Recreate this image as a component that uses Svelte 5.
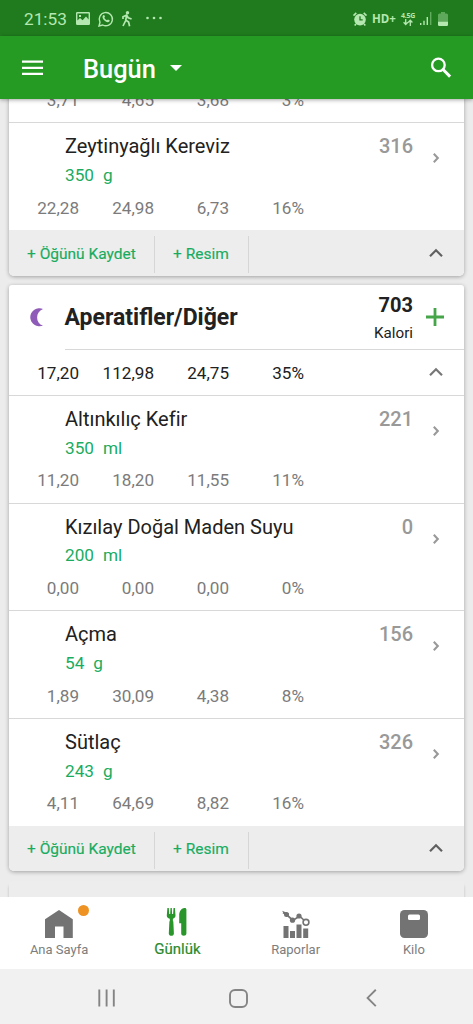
<script lang="ts">
  type Food = {
    name: string;
    amount: string;
    unit: string;
    calories: number;
    values: string[];
  };

  const lunch: Food[] = [
    { name: "", amount: "", unit: "", calories: 0, values: ["3,71", "4,65", "3,68", "3%"] },
    { name: "Zeytinyağlı Kereviz", amount: "350", unit: "g", calories: 316, values: ["22,28", "24,98", "6,73", "16%"] },
  ];

  const snacks: Food[] = [
    { name: "Altınkılıç Kefir", amount: "350", unit: "ml", calories: 221, values: ["11,20", "18,20", "11,55", "11%"] },
    { name: "Kızılay Doğal Maden Suyu", amount: "200", unit: "ml", calories: 0, values: ["0,00", "0,00", "0,00", "0%"] },
    { name: "Açma", amount: "54", unit: "g", calories: 156, values: ["1,89", "30,09", "4,38", "8%"] },
    { name: "Sütlaç", amount: "243", unit: "g", calories: 326, values: ["4,11", "64,69", "8,82", "16%"] },
  ];

  const totals = ["17,20", "112,98", "24,75", "35%"];
</script>

{#snippet chevronUp()}
  <svg class="chevron-up" width="16" height="12" viewBox="0 0 16 12">
    <path d="M2 9.2 8 3.2l6 6" fill="none" stroke="currentColor" stroke-width="2.2" />
  </svg>
{/snippet}

{#snippet macros(values: string[])}
  <div class="macros">
    {#each values as value}
      <span>{value}</span>
    {/each}
  </div>
{/snippet}

{#snippet foodRow(food: Food)}
  <div class="food">
    {#if food.name}
      <div class="food-top">
        <div>
          <p class="food-name">{food.name}</p>
          <p class="amount"><span>{food.amount}</span><span>{food.unit}</span></p>
        </div>
        <div class="food-side">
          <b>{food.calories}</b>
          <svg width="8" height="12" viewBox="0 0 8 12">
            <path d="M1.8 1.8 5.8 6l-4 4.2" fill="none" stroke="currentColor" stroke-width="2.1" />
          </svg>
        </div>
      </div>
    {/if}
    {@render macros(food.values)}
  </div>
{/snippet}

{#snippet cardFooter()}
  <footer>
    <button class="save">+ Öğünü Kaydet</button>
    <button class="photo">+ Resim</button>
    {@render chevronUp()}
  </footer>
{/snippet}

<div class="screen">
  <div class="status">
    <div class="status-left">
      <span class="time">21:53</span>
      <svg width="14" height="13" viewBox="0 0 14 13">
        <path fill="currentColor" fill-rule="evenodd" d="M1.2 0h11.6a1.2 1.2 0 0 1 1.2 1.2v10.6a1.2 1.2 0 0 1-1.2 1.2H1.2A1.2 1.2 0 0 1 0 11.8V1.2A1.2 1.2 0 0 1 1.2 0zM1.4 1.4v7.2L4 6l2.6 2.3L10 4.5l2.6 3V1.4zM3 3h2v2H3z" />
      </svg>
      <svg width="16" height="16" viewBox="0 0 16 16">
        <path d="M1 15l1-3.7A6.6 6.6 0 1 1 4.7 14z" fill="none" stroke="currentColor" stroke-width="1.4" />
        <path d="M5.3 4.3c.5-.5 1-.3 1.2.2l.5 1.2-.7 1c.6 1.2 1.4 2 2.7 2.6l1-.9 1.5.8c.4.3.2 1-.2 1.4-1 .9-2.4.7-3.9-.3C5.6 9 4.5 7.400 4.5 6c0-.8.3-1.3.8-1.7z" fill="currentColor" />
      </svg>
      <svg width="12" height="16" viewBox="0 0 12 16">
        <circle cx="6.5" cy="1.7" r="1.7" fill="currentColor" />
        <path d="M2 8V5.8L5.600 4l1.6 2.7L10.6 8M5.6 4.4 4.7 9.5 2 15M4.9 9.2 7.6 11l1 4.2" fill="none" stroke="currentColor" stroke-width="1.7" />
      </svg>
      <svg class="more" width="16" height="4" viewBox="0 0 16 4" fill="currentColor">
        <circle cx="1.5" cy="2" r="1.3" /><circle cx="8" cy="2" r="1.3" /><circle cx="14.5" cy="2" r="1.3" />
      </svg>
    </div>
    <div class="status-right">
      <svg width="14" height="14" viewBox="0 0 14 14">
        <circle cx="7" cy="7.6" r="5.8" fill="currentColor" />
        <path d="M.5 3.6 3.3.9M10.7.9l2.8 2.7M3 12l-1.3 1.5M11 12l1.3 1.5" stroke="currentColor" stroke-width="1.6" />
        <path d="M7 4.2v3.7h2.7" fill="none" stroke="#207b1e" stroke-width="1.3" />
      </svg>
      <span class="hd">HD+</span>
      <span class="network">
        <small>4.5G</small>
        <svg width="10" height="7" viewBox="0 0 10 7">
          <path d="M2.7 0v5M.6 3.3l2.1 2.2 2.1-2.2M7.3 7V2M5.2 3.5l2.1-2.2 2.1 2.2" fill="none" stroke="currentColor" stroke-width="1.3" />
        </svg>
      </span>
      <svg class="signal" width="12" height="13" viewBox="0 0 12 13" fill="currentColor">
        <path d="M0 11h1.4v2H0zM3.3 8.7h1.400V13H3.3zM6.6 5H8v8H6.6z" />
        <path d="M10 0h1.4v13H10z" opacity=".45" />
      </svg>
      <svg width="10" height="14" viewBox="0 0 10 14" fill="currentColor">
        <path d="M3 0h4v1.5h1.5A1.5 1.5 0 0 1 10 3v7H0V3a1.5 1.5 0 0 1 1.5-1.5H3z" opacity=".42" />
        <path d="M0 9.8h10v3a1.2 1.2 0 0 1-1.2 1.2H1.2A1.2 1.2 0 0 1 0 12.8z" />
      </svg>
    </div>
  </div>

  <header>
    <svg width="22" height="15" viewBox="0 0 22 15">
      <path d="M0 1.700h21M0 7.8h21M0 13.9h21" stroke="#fff" stroke-width="2.2" />
    </svg>
    <h1>Bugün</h1>
    <svg class="caret" width="12" height="6" viewBox="0 0 12 6"><path d="M0 0h12L6 6z" fill="#fff" /></svg>
    <svg class="search" width="22" height="22" viewBox="0 0 22 22">
      <circle cx="7.4" cy="7.9" r="6.3" fill="none" stroke="#fff" stroke-width="2.3" />
      <path d="m11.8 12.3 7.3 7.3" stroke="#fff" stroke-width="3" />
    </svg>
  </header>

  <main>
    <section class="card first">
      {#each lunch as food}
        {@render foodRow(food)}
      {/each}
      {@render cardFooter()}
    </section>

    <section class="card">
      <div class="meal">
        <svg class="moon" width="15" height="19" viewBox="0 0 15 19">
          <path d="M14 .9A9.200 9 0 1 0 14 17.500C6.200 15.500 6.200 3.500 14 .9z" fill="#8f5bb8" />
        </svg>
        <div class="meal-title">
          <h2>Aperatifler/Diğer</h2>
          <div class="meal-calories"><b>703</b><span>Kalori</span></div>
          <svg width="18" height="18" viewBox="0 0 18 18">
            <path d="M9 0v18M0 9h18" stroke="#45a548" stroke-width="2.8" />
          </svg>
        </div>
      </div>
      <div class="totals">
        {@render macros(totals)}
        {@render chevronUp()}
      </div>
      {#each snacks as food}
        {@render foodRow(food)}
      {/each}
      {@render cardFooter()}
    </section>

    <section class="card next"></section>
  </main>

  <nav>
    <div class="tab">
      <svg width="28" height="28" viewBox="0 0 28 28">
        <path d="M14 0 27.8 9.2V28H18.500V16.5h-8.500V28H0V9.2z" fill="#737373" />
      </svg>
      <span>Ana Sayfa</span>
      <i class="dot"></i>
    </div>
    <div class="tab active">
      <svg width="20" height="28" viewBox="0 0 20 28" fill="#28962a">
        <path d="M.4 0h1.4l.4 6h1L3.500 0h1.3l.3 6h1L6.500 0h1.400l.6 7.500c0 1.700-1.100 2.800-2.600 3.300v2.400h.4l.6 12.300c0 3.100-5.100 3.100-5.100 0l.6-12.300h.4v-2.400C.7 10.300-.2 9.200-.2 7.500z" />
        <path d="M19.400 1.500v24.100c0 2.900-5.200 2.900-5.200 0V15.200h-2V7.500C12.200 3.500 14 .6 17.400 0c1.200-.2 2 .4 2 1.500z" />
      </svg>
      <span>Günlük</span>
    </div>
    <div class="tab">
      <svg width="28" height="28" viewBox="0 0 28 28">
        <path d="M1.500 16h5v12h-5zM8 21h5v7H8zM14.500 14.500h5V28h-5zM21.200 18.500h5V28h-5z" fill="#737373" />
        <path d="M1 2.500 5 5l6 5.500 6.500-4.500L24 12" fill="none" stroke="#737373" stroke-width="1.7" />
        <g fill="#737373"><path d="M0 .8 7 3.500 4.500 7z" /><circle cx="4.500" cy="4.500" r="2.500" /><circle cx="10.500" cy="10.200" r="2.600" /><circle cx="17" cy="6" r="2.600" /></g>
        <circle cx="24" cy="12.300" r="2.900" fill="#fff" stroke="#737373" stroke-width="1.600" />
      </svg>
      <span>Raporlar</span>
    </div>
    <div class="tab">
      <svg width="28" height="28" viewBox="0 0 28 28">
        <rect width="28" height="28" rx="4.500" fill="#737373" />
        <rect x="8" y="4.500" width="12" height="5.500" rx="1.500" fill="#fff" />
      </svg>
      <span>Kilo</span>
    </div>
  </nav>

  <div class="system">
    <svg width="18" height="18" viewBox="0 0 18 18"><path d="M2.300 .5v17M9.600 .5v17M16.800 .5v17" stroke="#848484" stroke-width="1.9" /></svg>
    <svg class="home" width="19" height="19" viewBox="0 0 19 19"><rect x="1" y="1" width="17" height="17" rx="5" fill="none" stroke="#848484" stroke-width="1.9" /></svg>
    <svg width="11" height="18" viewBox="0 0 11 18"><path d="M9.800.8 1.600 8.900l8.200 8.200" fill="none" stroke="#848484" stroke-width="1.9" /></svg>
  </div>
</div>

<style>
  :global(body) {
    margin: 0;
    overflow: hidden;
  }

  .screen {
    display: flex;
    flex-direction: column;
    width: 473px;
    height: 1024px;
    overflow: hidden;
    background: #ececec;
    color: #212121;
    font-family: Roboto, "Liberation Sans", sans-serif;
  }

  svg {
    display: block;
    flex: none;
    overflow: visible;
  }

  p,
  h1,
  h2 {
    margin: 0;
  }

  .status {
    flex: none;
    display: flex;
    justify-content: space-between;
    height: 36px;
    padding: 1px 25px 0 24px;
    box-sizing: border-box;
    background: #207b1e;
    color: #b4e8b0;
  }

  .status-left,
  .status-right {
    display: flex;
    align-items: center;
  }

  .status-left {
    gap: 7px;
  }

  .time {
    width: 45px;
    font-size: 17.2px;
  }

  .status-left svg:first-of-type {
    margin-right: 1px;
  }

  .more {
    margin: -1px 0 0 6px;
  }

  .status-right {
    gap: 5px;
  }

  .hd {
    width: 24px;
    font: 700 11.5px "Open Sans", sans-serif;
  }

  .network {
    display: flex;
    flex-direction: column;
    align-items: center;
    width: 14px;

    & small {
      font: 700 7px/7px "Open Sans", sans-serif;
      letter-spacing: -0.3px;
    }
  }

  .signal {
    margin-right: 1px;
  }

  header {
    position: relative;
    z-index: 1;
    flex: none;
    display: flex;
    align-items: center;
    height: 62.5px;
    padding: 1px 20px 0 22px;
    box-sizing: border-box;
    background: #259b24;
    box-shadow: 0 1px 4px rgba(0, 0, 0, 0.35);
    color: #fff;
  }

  h1 {
    margin: 3px 0 0 39px;
    font-size: 25.4px;
    font-weight: 500;
  }

  .caret {
    margin-left: 14px;
  }

  .search {
    margin-left: auto;
  }

  main {
    flex: 1;
    min-height: 0;
    overflow: hidden;
    padding: 0 9px;
  }

  .card {
    margin-bottom: 9.4px;
    border-radius: 3px 3px 5px 5px;
    background: #fff;
    box-shadow: 0 1px 4px rgba(0, 0, 0, 0.32);
  }

  /* scrolled under the header */
  .first {
    margin-top: -83.8px;
  }

  .next {
    height: 60px;
    background: #ededed;
    box-shadow: 0 4px 3px rgba(0, 0, 0, 0.2);
  }

  .food {
    display: flex;
    flex-direction: column;
    height: 107.67px;
    padding-bottom: 11.5px;
    box-sizing: border-box;
    border-top: 1px solid #d8d8d8;
  }

  .food-top {
    display: flex;
    justify-content: space-between;
    padding: 10.8px 24px 0 56px;
  }

  .food-name {
    font-size: 20px;
    line-height: 25px;
    font-variant-ligatures: none;
  }

  .amount {
    display: flex;
    gap: 9px;
    margin-top: 4.7px;
    font-size: 17.2px;
    line-height: 22px;
    color: #19ac60;
  }

  .food-side {
    display: flex;
    gap: 20px;
    color: #999;

    & b {
      font-size: 20px;
      font-weight: 500;
      line-height: 25px;
    }

    & svg {
      margin: 18.2px 0 0 -1px;
    }
  }

  .macros {
    display: grid;
    grid-template-columns: 70px 75px 75px 75px;
    margin-top: auto;
    font-size: 17.1px;
    line-height: 22px;
    text-align: right;
    color: #7b7b7b;
  }

  footer {
    display: flex;
    align-items: center;
    height: 45.5px;
    border-radius: 0 0 5px 5px;
    background: #ededed;
  }

  button {
    height: 37px;
    margin: 4px 0 0;
    border: 0;
    border-right: 1px solid #d6d6d6;
    box-sizing: border-box;
    padding: 0 0 2px;
    background: none;
    color: #19ac60;
    font: 400 15.5px Roboto, sans-serif;
    text-align: left;
    white-space: nowrap;
    -webkit-text-stroke: 0.15px currentColor;
  }

  .save {
    width: 146px;
    padding-left: 18px;
  }

  .photo {
    width: 94px;
    padding-left: 18px;
  }

  .chevron-up {
    margin-left: auto;
    margin-right: 20px;
    color: #606060;
  }

  .meal {
    display: flex;
    height: 64.7px;
  }

  .moon {
    margin: 23px 0 0 20px;
  }

  .meal-title {
    flex: 1;
    display: flex;
    align-items: center;
    margin-left: 20.5px;
    padding-right: 20px;
    border-bottom: 1px solid #d8d8d8;
  }

  h2 {
    flex: 1;
    margin-top: 2px;
    font-size: 23px;
    font-weight: 700;
  }

  .meal-calories {
    display: flex;
    flex-direction: column;
    align-items: flex-end;
    margin: 3px 13px 0 0;
    font-size: 15.2px;

    & b {
      font-size: 20px;
      line-height: 25px;
    }

    & span {
      margin-top: 5px;
      line-height: 20px;
    }
  }

  .totals {
    display: flex;
    align-items: center;
    height: 45.5px;

    & .macros {
      margin-top: 2px;
      color: #212121;
    }

    & .chevron-up {
      color: #777;
    }
  }

  nav {
    position: relative;
    flex: none;
    display: grid;
    grid-template-columns: repeat(4, 1fr);
    height: 72px;
    background: #fff;
  }

  .tab {
    position: relative;
    display: flex;
    flex-direction: column;
    align-items: center;
    padding-top: 13px;
    color: #7d7d7d;
    font-size: 13px;
    line-height: 16px;

    & span {
      margin-top: 4px;
    }
  }

  .active {
    padding-top: 11px;
    color: #2b8a2d;
    font-size: 15px;
    -webkit-text-stroke: 0.2px currentColor;

    & span {
      margin-top: 5px;
    }
  }

  .dot {
    position: absolute;
    top: 8px;
    left: 78px;
    width: 11px;
    height: 11px;
    border-radius: 50%;
    background: #ee9223;
  }

  .system {
    flex: none;
    display: flex;
    align-items: center;
    justify-content: space-between;
    height: 55px;
    padding: 3px 96px 0 97px;
    box-sizing: border-box;
    background: #f1f1f1;
  }

  .home {
    margin-right: 4px;
  }
</style>
